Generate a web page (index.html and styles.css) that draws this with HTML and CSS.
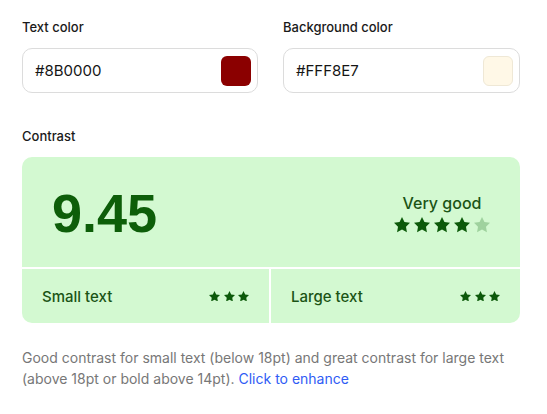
FILE: index.html
```html
<!DOCTYPE html>
<html lang="en">
<head>
<meta charset="utf-8">
<title>Contrast checker</title>
<link rel="stylesheet" href="styles.css">
</head>
<body>
<div class="page">
  <div class="fields">
    <div class="field">
      <div class="label">Text color</div>
      <div class="input">
        <span class="value">#8B0000</span>
        <span class="swatch swatch-fg"></span>
      </div>
    </div>
    <div class="field">
      <div class="label">Background color</div>
      <div class="input">
        <span class="value">#FFF8E7</span>
        <span class="swatch swatch-bg"></span>
      </div>
    </div>
  </div>

  <div class="label contrast-label">Contrast</div>
  <div class="card">
    <div class="card-top">
      <div class="ratio">9.45</div>
      <div class="rating">
        <div class="rating-text">Very good</div>
        <div class="stars stars-big">
          <svg viewBox="2 2 20 19.02"><polygon points="12,2 15.09,8.26 22,9.27 17,14.14 18.18,21.02 12,17.77 5.82,21.02 7,14.14 2,9.27 8.91,8.26"/></svg>
          <svg viewBox="2 2 20 19.02"><polygon points="12,2 15.09,8.26 22,9.27 17,14.14 18.18,21.02 12,17.77 5.82,21.02 7,14.14 2,9.27 8.91,8.26"/></svg>
          <svg viewBox="2 2 20 19.02"><polygon points="12,2 15.09,8.26 22,9.27 17,14.14 18.18,21.02 12,17.77 5.82,21.02 7,14.14 2,9.27 8.91,8.26"/></svg>
          <svg viewBox="2 2 20 19.02"><polygon points="12,2 15.09,8.26 22,9.27 17,14.14 18.18,21.02 12,17.77 5.82,21.02 7,14.14 2,9.27 8.91,8.26"/></svg>
          <svg class="off" viewBox="2 2 20 19.02"><polygon points="12,2 15.09,8.26 22,9.27 17,14.14 18.18,21.02 12,17.77 5.82,21.02 7,14.14 2,9.27 8.91,8.26"/></svg>
        </div>
      </div>
    </div>
    <div class="card-bottom">
      <div class="cell cell-left">
        <span class="cell-label">Small text</span>
        <div class="stars stars-small">
          <svg viewBox="2 2 20 19.02"><polygon points="12,2 15.09,8.26 22,9.27 17,14.14 18.18,21.02 12,17.77 5.82,21.02 7,14.14 2,9.27 8.91,8.26"/></svg>
          <svg viewBox="2 2 20 19.02"><polygon points="12,2 15.09,8.26 22,9.27 17,14.14 18.18,21.02 12,17.77 5.82,21.02 7,14.14 2,9.27 8.91,8.26"/></svg>
          <svg viewBox="2 2 20 19.02"><polygon points="12,2 15.09,8.26 22,9.27 17,14.14 18.18,21.02 12,17.77 5.82,21.02 7,14.14 2,9.27 8.91,8.26"/></svg>
        </div>
      </div>
      <div class="cell">
        <span class="cell-label">Large text</span>
        <div class="stars stars-small">
          <svg viewBox="2 2 20 19.02"><polygon points="12,2 15.09,8.26 22,9.27 17,14.14 18.18,21.02 12,17.77 5.82,21.02 7,14.14 2,9.27 8.91,8.26"/></svg>
          <svg viewBox="2 2 20 19.02"><polygon points="12,2 15.09,8.26 22,9.27 17,14.14 18.18,21.02 12,17.77 5.82,21.02 7,14.14 2,9.27 8.91,8.26"/></svg>
          <svg viewBox="2 2 20 19.02"><polygon points="12,2 15.09,8.26 22,9.27 17,14.14 18.18,21.02 12,17.77 5.82,21.02 7,14.14 2,9.27 8.91,8.26"/></svg>
        </div>
      </div>
    </div>
  </div>

  <p class="note">Good contrast for small text (below 18pt) and great contrast for large text (above 18pt or bold above 14pt). <a class="link" href="#">Click to enhance</a></p>
</div>
</body>
</html>
```

FILE: styles.css
```css
* { box-sizing: border-box; }

body {
  margin: 0;
  background: #ffffff;
  font-family: Inter, "Noto Sans", sans-serif;
  color: #1a1a1a;
}

.page {
  padding: 19px 27px 0 22px;
}

.fields {
  display: grid;
  grid-template-columns: 236px 237px;
  column-gap: 25px;
}

.label {
  font-size: 13px;
  line-height: 16px;
  font-weight: 500;
  color: #1a1a1a;
  margin-bottom: 13px;
}

.input {
  height: 45px;
  border: 1px solid #dcdcdc;
  border-radius: 10px;
  display: flex;
  align-items: center;
  justify-content: space-between;
  padding: 0 6px 0 12px;
}

.value {
  font-size: 15px;
  color: #151515;
}

.swatch {
  width: 30px;
  height: 30px;
  border-radius: 6px;
}

.swatch-fg { background: #8b0000; }
.swatch-bg { background: #fff8e7; border: 1px solid #efe8d6; }

.contrast-label {
  margin-top: 35px;
}

.card {
  background: #d3f9d1;
  border-radius: 10px;
  overflow: hidden;
  color: #175a12;
}

.card-top {
  height: 112px;
  border-bottom: 2px solid #ffffff;
  display: flex;
  align-items: center;
  justify-content: space-between;
  padding: 0 30px 0 30px;
}

.ratio {
  font-family: "Liberation Sans", Arial, sans-serif;
  font-weight: 700;
  font-size: 54px;
  color: #0d5e09;
  line-height: 1;
  margin-top: 1px;
}

.rating {
  display: flex;
  flex-direction: column;
  align-items: center;
  gap: 4px;
  margin-top: 2px;
}

.rating-text {
  font-size: 16px;
  line-height: 20px;
  font-weight: 500;
  color: #1b5416;
}

.stars {
  display: flex;
}

.stars svg { fill: #0c5a0a; display: block; }
.stars svg.off { fill: #9fd29e; }

.stars-big { gap: 4px; }
.stars-big svg { width: 16px; height: 15.2px; }

.stars-small { gap: 3.5px; }
.stars-small svg { width: 11px; height: 10.5px; }

.card-bottom {
  display: grid;
  grid-template-columns: 1fr 1fr;
  height: 54px;
}

.cell {
  display: flex;
  align-items: center;
  justify-content: space-between;
  padding: 0 20px 0 20px;
}

.cell-left {
  border-right: 2px solid #ffffff;
}

.cell-label {
  font-size: 15px;
  font-weight: 500;
  color: #1b5416;
}

.note {
  margin: 24px 0 0 0;
  font-size: 14px;
  line-height: 21px;
  color: #777777;
}

.link {
  color: #2f5cf5;
  text-decoration: none;
}
```
